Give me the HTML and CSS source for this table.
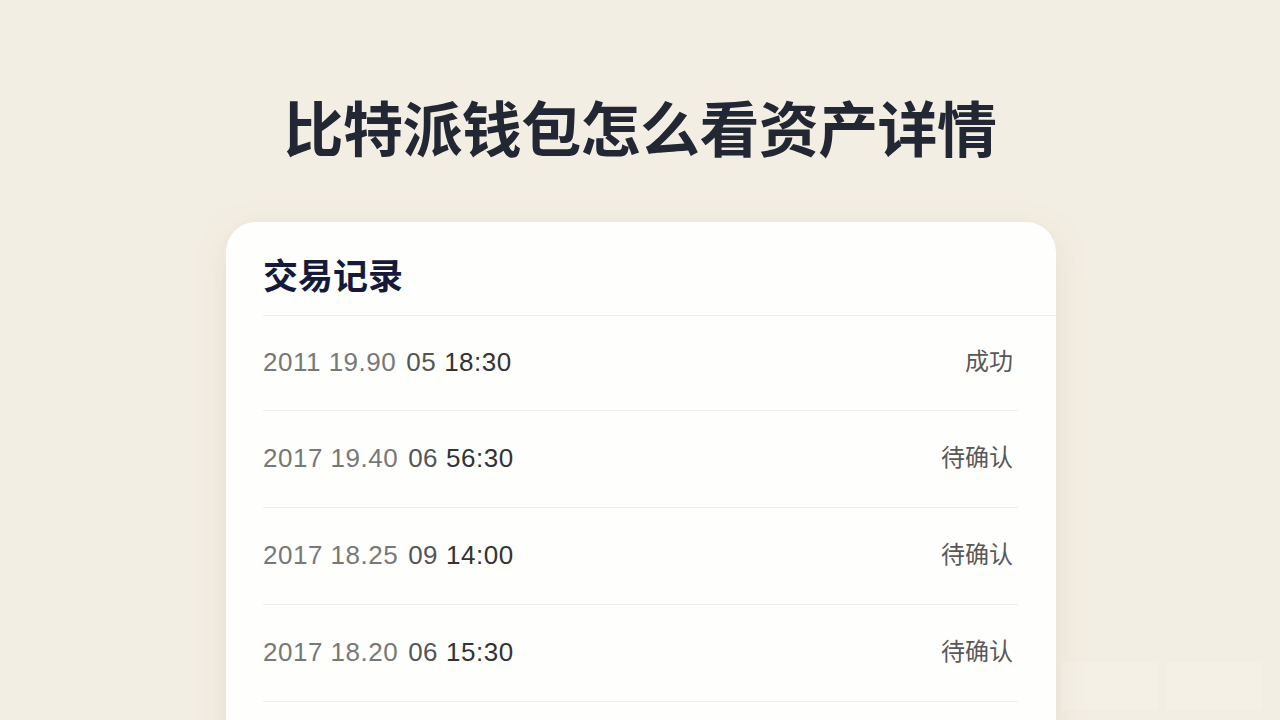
FILE: index.html
```
<!DOCTYPE html>
<html lang="zh-CN">
<head>
<meta charset="utf-8">
<title>比特派钱包怎么看资产详情</title>
<link rel="stylesheet" href="styles.css">
</head>
<body>
    <div class="page">
        <h1 class="title">比特派钱包怎么看资产详情</h1>

        <div class="card">
            <div class="card-head">交易记录</div>

            <div class="row first">
                <div class="when"><span class="date">2011 19.90</span><span class="day">05</span><span class="time">18:30</span></div>
                <div class="status">成功</div>
            </div>
            <div class="row">
                <div class="when"><span class="date">2017 19.40</span><span class="day">06</span><span class="time">56:30</span></div>
                <div class="status">待确认</div>
            </div>
            <div class="row">
                <div class="when"><span class="date">2017 18.25</span><span class="day">09</span><span class="time">14:00</span></div>
                <div class="status">待确认</div>
            </div>
            <div class="row">
                <div class="when"><span class="date">2017 18.20</span><span class="day">06</span><span class="time">15:30</span></div>
                <div class="status">待确认</div>
            </div>
            <div class="row"></div>
        </div>
    </div>
    <div class="mark"><span></span><span></span></div>
</body>
</html>
```

FILE: styles.css
```
html, body {
    margin: 0;
    padding: 0;
    width: 100%;
    height: 100%;
    overflow: hidden;
}

body {
    background-color: #f3eee3;
    font-family: "Noto Sans CJK SC", "Noto Sans", sans-serif;
    color: #222632;
}

.page {
    display: flex;
    flex-direction: column;
    align-items: center;
    padding-top: 90px;
}

.title {
    margin: 0;
    font-size: 60px;
    line-height: 72px;
    font-weight: 700;
    letter-spacing: -0.6px;
    color: #232733;
}

.card {
    width: 830px;
    margin-top: 60px;
    margin-left: 2px;
    background-color: #fefefd;
    border-radius: 30px;
    box-shadow: 0 8px 36px rgba(120, 100, 60, 0.10);
    padding-left: 37px;
    box-sizing: border-box;
}

.card-head {
    height: 94px;
    display: flex;
    align-items: center;
    padding-top: 10px;
    box-sizing: border-box;
    font-size: 35px;
    font-weight: 700;
    color: #161a3a;
    border-bottom: 1px solid #f1efec;
}

.row {
    height: 96px;
    margin-right: 38px;
    display: flex;
    align-items: center;
    justify-content: space-between;
    border-bottom: 1px solid #f1efec;
    font-family: "Liberation Sans", Arial, sans-serif;
    font-size: 26px;
    letter-spacing: 0.5px;
}

.row.first {
    height: 94px;
}

.when {
    padding-bottom: 2px;
}

.date {
    color: #787878;
}

.day {
    color: #555;
    margin-left: 10px;
}

.time {
    color: #333;
    margin-left: 8px;
}

.status {
    font-family: "Noto Sans CJK SC", sans-serif;
    color: #585858;
    font-size: 24px;
    letter-spacing: 0;
    line-height: 24px;
    padding-right: 5px;
    padding-bottom: 6px;
}

.mark {
    position: absolute;
    left: 1062px;
    top: 662px;
    display: flex;
    gap: 8px;
}

.mark span {
    display: block;
    width: 96px;
    height: 48px;
    background-color: rgba(255, 255, 255, 0.12);
}
```
